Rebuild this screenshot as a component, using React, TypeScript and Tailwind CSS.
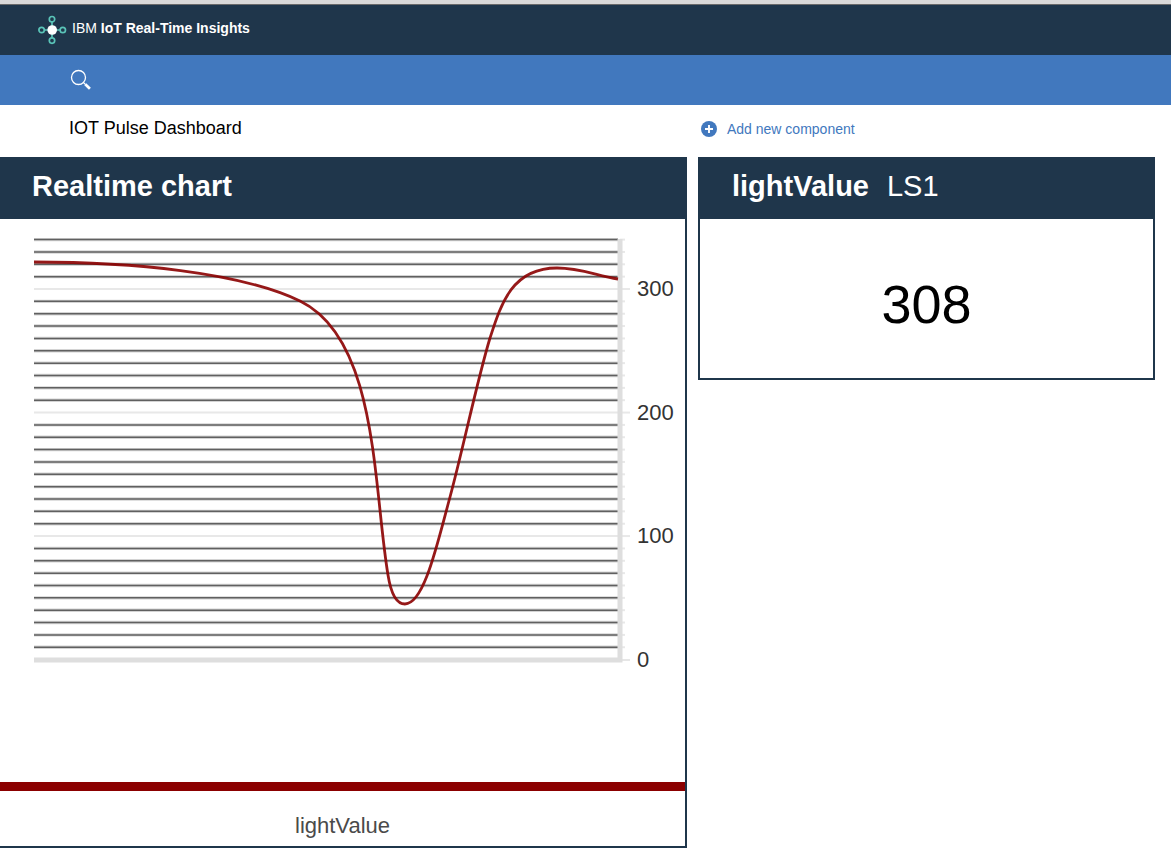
import type { ReactNode } from "react";
import { clsx } from "clsx";

const PLOT = { left: 34, right: 618, zero: 441, top: 21 };
const MAX_VALUE = 340;
const STEP = 10;

const gridValues = Array.from({ length: MAX_VALUE / STEP }, (_, i) => (i + 1) * STEP);
const labelValues = [300, 200, 100, 0];

function yFor(value: number) {
  return PLOT.zero - (value / MAX_VALUE) * (PLOT.zero - PLOT.top);
}

function LogoIcon() {
  return (
    <svg viewBox="0 0 30 30" className="size-[30px] shrink-0" aria-hidden="true">
      <g fill="none" stroke="#5ac4b8" strokeWidth="1.7">
        <path d="M15 7v16M7 15h16" />
        <circle cx="15" cy="4.2" r="2.7" fill="#1f364b" />
        <circle cx="15" cy="25.6" r="2.7" fill="#1f364b" />
        <circle cx="4.6" cy="15" r="2.7" fill="#1f364b" />
        <circle cx="25.8" cy="15" r="2.7" fill="#1f364b" />
      </g>
      <circle cx="15.2" cy="15" r="4.8" fill="#fff" />
    </svg>
  );
}

function SearchIcon() {
  return (
    <svg viewBox="0 0 22 22" className="size-[22px]" aria-hidden="true">
      <circle cx="8.5" cy="8.5" r="7" fill="none" stroke="#fff" strokeWidth="1.3" />
      <path d="M13.6 13.6l2 2" stroke="#fff" strokeWidth="1.3" />
      <path d="M15.3 15.3l4.6 4.4" stroke="#fff" strokeWidth="2.8" />
    </svg>
  );
}

function PlusIcon() {
  return (
    <svg viewBox="0 0 16 16" className="size-4 shrink-0" aria-hidden="true">
      <circle cx="8" cy="8" r="8" fill="#4178be" />
      <path d="M8 4v8M4 8h8" stroke="#fff" strokeWidth="1.9" />
    </svg>
  );
}

interface PanelProps {
  title: string;
  subtitle?: string;
  flush?: boolean;
  children: ReactNode;
}

function Panel({ title, subtitle, flush, children }: PanelProps) {
  return (
    <section className={clsx("border-[#1f364b]", flush ? "border-r-2 border-b-2" : "border-2 border-t-0")}>
      <h2 className="flex h-[62px] items-center gap-[18px] bg-[#1f364b] pb-1 pl-8 text-[29px] leading-9 font-bold text-white">
        {title}
        {subtitle && <span className="font-normal">{subtitle}</span>}
      </h2>
      {children}
    </section>
  );
}

function RealtimeChart() {
  return (
    <svg viewBox="0 0 685 563" className="block h-auto w-full" role="img" aria-label="lightValue over time">
      {gridValues.map((value) => {
        const y = yFor(value) - 0.4;
        const major = value % 100 === 0;
        return (
          <g key={value}>
            {!major && <path d={`M${PLOT.left} ${y}H${PLOT.right}`} stroke="#d4d4d4" strokeWidth="3.4" />}
            <path
              d={`M${PLOT.left} ${y}H${PLOT.right}`}
              stroke={major ? "#e8e8e8" : "#606060"}
              strokeWidth={major ? 2 : 1.5}
            />
            <path d={`M620 ${y}H${major ? 630 : 625}`} stroke="#e8e8e8" strokeWidth="2" />
          </g>
        );
      })}
      <path d={`M${PLOT.left} ${PLOT.zero}H630`} stroke="#e6e6e6" strokeWidth="2" />
      <path d={`M${PLOT.left} ${PLOT.zero}H620V${PLOT.top - 1}`} fill="none" stroke="#dedede" strokeWidth="5" />
      <path
        d="M34 43C130 43 240 53 300 82C378 120 373 266 388 356C391 375 397 385 405 385C424 385 437 326 450 278C463 230 477 162 490 119C501 85 512 49 557 49C580 49 595 56 618 60"
        fill="none"
        stroke="#8b0000"
        strokeOpacity="0.9"
        strokeWidth="2.8"
      />
      {labelValues.map((value) => (
        <text key={value} x="637" y={yFor(value) + 7} fontSize="22" fill="#333">
          {value}
        </text>
      ))}
    </svg>
  );
}

export default function App() {
  return (
    <div className="bg-white font-['Liberation_Sans',Arial,sans-serif] text-black">
      <div className="h-[5px] border-b border-[#6a6a6a] bg-[#d9d9d9]" />
      <header className="flex h-[50px] items-center gap-[5px] bg-[#1f364b] pl-[37px] text-white">
        <LogoIcon />
        <h1 className="pb-1 text-sm">
          IBM <b>IoT Real-Time Insights</b>
        </h1>
      </header>
      <nav className="flex h-[50px] items-center bg-[#4178be] pl-[70px]">
        <button type="button" aria-label="Search">
          <SearchIcon />
        </button>
      </nav>

      <main className="grid grid-cols-[687fr_457fr] items-start gap-x-[11px] pr-4">
        <div className="flex h-[52px] items-center pb-1.5 pl-[69px] text-lg">IOT Pulse Dashboard</div>
        <div className="flex h-[52px] items-center pb-1 pl-[3px]">
          <button type="button" className="flex items-center gap-2.5 text-sm text-[#4178be]">
            <PlusIcon />
            Add new component
          </button>
        </div>

        <Panel title="Realtime chart" flush>
          <RealtimeChart />
          <div className="h-[9px] bg-[#8b0000]" />
          <p className="pt-[21px] pb-1.5 text-center text-[22px] leading-7 text-[#4a4a4a]">lightValue</p>
        </Panel>

        <Panel title="lightValue" subtitle="LS1">
          <p className="pt-[55px] pb-11 text-center text-[54px] leading-[60px]">308</p>
        </Panel>
      </main>
    </div>
  );
}
